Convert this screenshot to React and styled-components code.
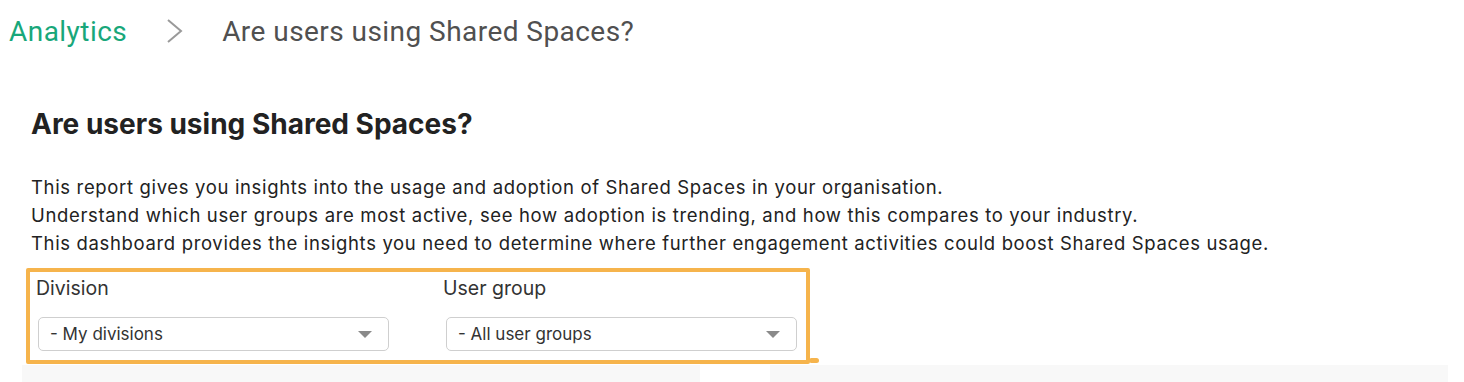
import styled, { createGlobalStyle } from "styled-components";

const GlobalStyle = createGlobalStyle`
  body {
    margin: 0;
    background: #fff;
    font-family: Inter, "Noto Sans", sans-serif;
    color: #222;
  }
`;

// Breadcrumb
const Crumbs = styled.nav`
  display: flex;
  align-items: center;
  height: 62px;
  padding-left: 9px;
  font-family: Roboto, "Liberation Sans", sans-serif;
  font-size: 28px;
  letter-spacing: 0.45px;
`;

const CrumbLink = styled.a`
  color: #18a77a;
  text-decoration: none;
`;

const CrumbSep = styled.span`
  display: flex;
  margin: 0 39px 0 38px;
`;

const CrumbCurrent = styled.span`
  color: #505050;
`;

// Report
const Report = styled.section`
  padding: 0 16px 0 22px;
`;

const Intro = styled.div`
  padding-left: 9px;
`;

const Title = styled.h1`
  margin: 42px 0 0;
  font-size: 28px;
  line-height: 40px;
  font-weight: 700;
  color: #222;
`;

const Description = styled.p`
  margin: 29px 0 0;
  font-size: 18.5px;
  line-height: 28px;
  letter-spacing: 0.65px;
  color: #222;
`;

const FilterBox = styled.div`
  position: relative;
  box-sizing: border-box;
  width: 784px;
  height: 96px;
  margin: 11px 0 0 4px;
  padding: 4px 0 0 6px;
  border: 4px solid #f6b44c;
  border-radius: 2px;
  display: grid;
  grid-template-columns: 407px 407px;

  &::after {
    content: "";
    position: absolute;
    right: -13px;
    bottom: -3px;
    width: 10px;
    height: 5px;
    border-radius: 3px;
    background: #f6b44c;
  }
`;

const Field = styled.div`
  display: flex;
  flex-direction: column;
`;

const Label = styled.label`
  font-size: 19.5px;
  line-height: 24px;
  color: #333;
`;

const Select = styled.div`
  box-sizing: border-box;
  display: flex;
  align-items: center;
  justify-content: space-between;
  width: 351px;
  height: 34px;
  margin: 17px 0 0 ${(p) => p.$offset}px;
  padding: 0 16px 0 11px;
  border: 1px solid #cfcfcf;
  border-radius: 5px;
  background: #fff;
  font-size: 17px;
  color: #333;
`;

const Caret = styled.span`
  width: 0;
  height: 0;
  border-left: 7px solid transparent;
  border-right: 7px solid transparent;
  border-top: 7px solid #8a8a8a;
`;

const Panels = styled.div`
  display: grid;
  grid-template-columns: 678px 678px;
  column-gap: 70px;
  margin-top: 1px;
`;

const Panel = styled.div`
  height: 40px;
  background: #f8f8f8;
`;

function Chevron() {
  return (
    <svg width="18" height="26" viewBox="0 0 18 26">
      <polyline points="3,2 16,13 3,24" fill="none" stroke="#9a9a9a" strokeWidth="2" />
    </svg>
  );
}

const filters = [
  { label: "Division", value: "- My divisions", offset: 2 },
  { label: "User group", value: "- All user groups", offset: 3 },
];

export default function App() {
  return (
    <>
      <GlobalStyle />
      <Crumbs>
        <CrumbLink href="#">Analytics</CrumbLink>
        <CrumbSep>
          <Chevron />
        </CrumbSep>
        <CrumbCurrent>Are users using Shared Spaces?</CrumbCurrent>
      </Crumbs>
      <Report>
        <Intro>
          <Title>Are users using Shared Spaces?</Title>
          <Description>
            This report gives you insights into the usage and adoption of Shared Spaces in your organisation.
            <br />
            Understand which user groups are most active, see how adoption is trending, and how this compares to your industry.
            <br />
            This dashboard provides the insights you need to determine where further engagement activities could boost Shared Spaces usage.
          </Description>
        </Intro>
        <FilterBox>
          {filters.map((f) => (
            <Field key={f.label}>
              <Label>{f.label}</Label>
              <Select $offset={f.offset}>
                <span>{f.value}</span>
                <Caret />
              </Select>
            </Field>
          ))}
        </FilterBox>
        <Panels>
          <Panel />
          <Panel />
        </Panels>
      </Report>
    </>
  );
}
